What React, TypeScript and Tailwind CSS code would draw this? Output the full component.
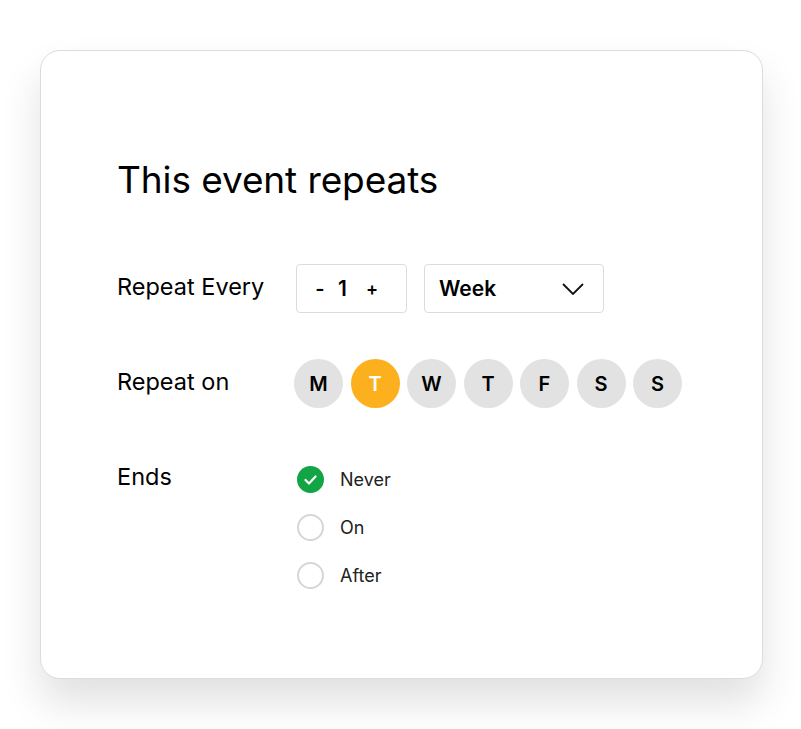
import React from "react";

export default function App() {
  const days = ["M", "T", "W", "T", "F", "S", "S"];
  return (
    <div className="w-[801px] h-[729px] bg-white pt-[50px] pl-[40px]" style={{ fontFamily: "Inter, 'Noto Sans', sans-serif" }}>
      <div className="w-[723px] h-[629px] rounded-[20px] border border-[#dcdcdc] bg-white shadow-[0_24px_40px_rgba(0,0,0,0.12)] pl-[76px] pt-[106px]">
        <h1 className="text-[37px] leading-[46px] text-black font-normal tracking-[-0.1px]">This event repeats</h1>
        <div className="mt-[61px] flex items-center">
          <div className="w-[179px] text-[23.5px] text-black -mt-[4px]">Repeat Every</div>
          <div className="w-[111px] h-[49px] rounded-[4px] border border-[#dcdcdc] flex items-center pl-[18px] text-black">
            <span className="text-[20px] font-semibold w-[10px] text-center">-</span>
            <span className="text-[21px] font-semibold ml-[13px]">1</span>
            <span className="text-[18px] font-semibold ml-[19px]">+</span>
          </div>
          <div className="ml-[17px] w-[180px] h-[49px] rounded-[4px] border border-[#dcdcdc] flex items-center justify-between pl-[14px] pr-[19px]">
            <span className="text-[21px] font-semibold text-black">Week</span>
            <svg width="22" height="12" viewBox="0 0 22 12" fill="none">
              <path d="M1 1l10 10L21 1" stroke="#111" strokeWidth="1.8" />
            </svg>
          </div>
        </div>
        <div className="mt-[46px] flex items-center">
          <div className="w-[177px] text-[23.5px] text-black -mt-[4px]">Repeat on</div>
          <div className="flex gap-[7.5px]">
            {days.map((d, i) => (
              <div
                key={i}
                className={
                  i === 1
                    ? "w-[49px] h-[49px] rounded-full bg-[#fdb01d] flex items-center justify-center text-[20px] font-semibold text-white"
                    : "w-[49px] h-[49px] rounded-full bg-[#e2e2e2] flex items-center justify-center text-[20px] font-semibold text-black"
                }
              >
                {d}
              </div>
            ))}
          </div>
        </div>
        <div className="mt-[45px] flex items-start">
          <div className="w-[180px] text-[23.5px] text-black leading-[44px] mt-[2px]">Ends</div>
          <div className="flex flex-col gap-[21px] pt-[13px]">
            <div className="flex items-center gap-[16px]">
              <div className="w-[27px] h-[27px] rounded-full bg-[#12a545] flex items-center justify-center">
                <svg width="13" height="10" viewBox="0 0 13 10" fill="none">
                  <path d="M1.5 5l3.5 3.5L11.5 1.5" stroke="white" strokeWidth="2.2" strokeLinecap="round" strokeLinejoin="round" />
                </svg>
              </div>
              <span className="text-[18px] text-[#222]">Never</span>
            </div>
            <div className="flex items-center gap-[16px]">
              <div className="w-[27px] h-[27px] rounded-full border-2 border-[#d6d6d6]" />
              <span className="text-[18px] text-[#222]">On</span>
            </div>
            <div className="flex items-center gap-[16px]">
              <div className="w-[27px] h-[27px] rounded-full border-2 border-[#d6d6d6]" />
              <span className="text-[18px] text-[#222]">After</span>
            </div>
          </div>
        </div>
      </div>
    </div>
  );
}
